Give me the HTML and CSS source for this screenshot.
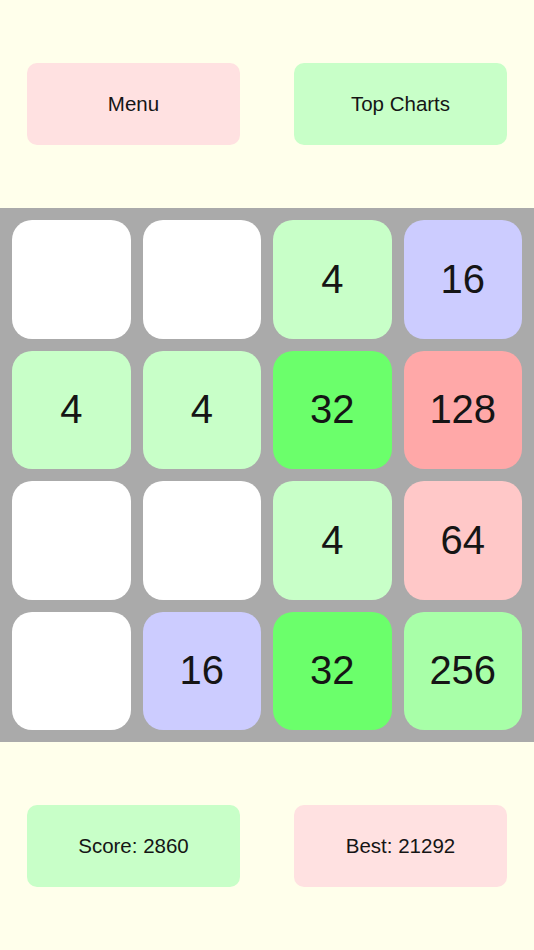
FILE: index.html
```html
<!DOCTYPE html>
<html>
<head>
<meta charset="utf-8">
<link rel="stylesheet" href="styles.css">
</head>
<body>
<div class="bar">
  <div class="btn pink">Menu</div>
  <div class="btn green">Top Charts</div>
</div>
<div class="board">
  <div class="tile t0"></div>
  <div class="tile t0"></div>
  <div class="tile t4">4</div>
  <div class="tile t16">16</div>
  <div class="tile t4">4</div>
  <div class="tile t4">4</div>
  <div class="tile t32">32</div>
  <div class="tile t128">128</div>
  <div class="tile t0"></div>
  <div class="tile t0"></div>
  <div class="tile t4">4</div>
  <div class="tile t64">64</div>
  <div class="tile t0"></div>
  <div class="tile t16">16</div>
  <div class="tile t32">32</div>
  <div class="tile t256">256</div>
</div>
<div class="bar">
  <div class="btn green">Score: 2860</div>
  <div class="btn pink">Best: 21292</div>
</div>
</body>
</html>
```
FILE: styles.css
```css
html, body {
  margin: 0;
  padding: 0;
  background: #FFFFEB;
  font-family: "Liberation Sans", Arial, sans-serif;
  color: #151515;
}
.bar {
  height: 208px;
  display: grid;
  grid-template-columns: 1fr 1fr;
  align-items: center;
  justify-items: center;
}
.btn {
  width: 213px;
  height: 82px;
  border-radius: 10px;
  display: flex;
  align-items: center;
  justify-content: center;
  font-size: 20.5px;
}
.pink { background: #FFE1E1; }
.green { background: #C8FFC8; }
.board {
  box-sizing: border-box;
  height: 534px;
  background: #AAAAAA;
  padding: 12px;
  display: grid;
  grid-template-columns: repeat(4, 1fr);
  grid-template-rows: repeat(4, 1fr);
  gap: 12px;
}
.tile {
  border-radius: 20px;
  display: flex;
  align-items: center;
  justify-content: center;
  font-size: 40px;
}
.t0 { background: #FFFFFF; }
.t4 { background: #C8FFC8; }
.t16 { background: #CCCCFF; }
.t32 { background: #6BFF6B; }
.t64 { background: #FFC8C8; }
.t128 { background: #FFA8A8; }
.t256 { background: #A8FFA8; }
```
